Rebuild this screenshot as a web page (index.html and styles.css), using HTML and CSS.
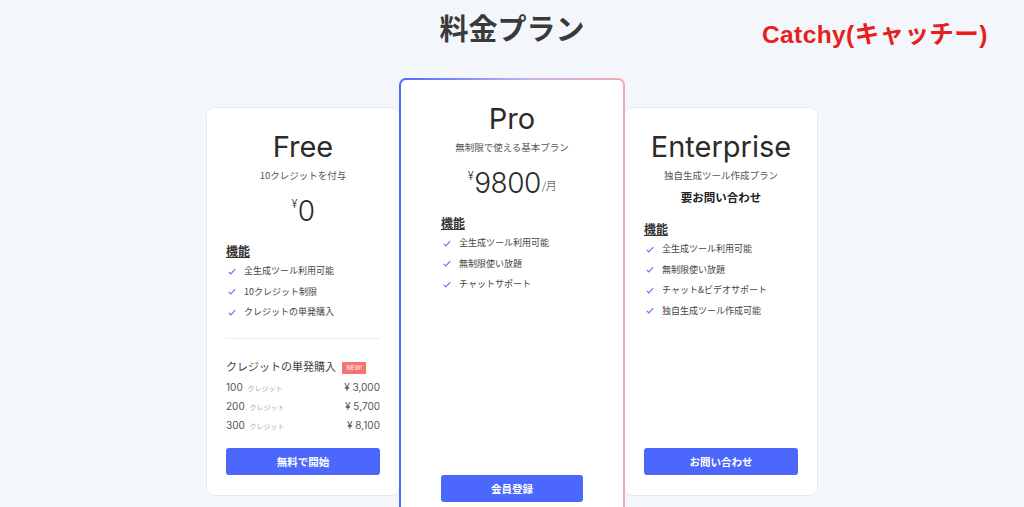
FILE: index.html
```html
<!DOCTYPE html>
<html lang="ja">
<head>
    <meta charset="UTF-8">
    <meta name="viewport" content="width=device-width, initial-scale=1.0">
    <title>料金プラン</title>
    <link rel="stylesheet" href="styles.css">
</head>
<body>
    <h1 class="page-title">料金プラン</h1>
    <div class="catchy">Catchy(キャッチー)</div>

    <div class="plans">
        <!-- Free -->
        <div class="plan side">
            <div class="plan-name">Free</div>
            <div class="plan-sub">10クレジットを付与</div>
            <div class="price"><span class="yen">¥</span>0</div>
            <div class="features-title">機能</div>
            <ul class="features">
                <li><svg viewBox="0 0 10 8"><polyline points="1,4.5 3.5,7 9,1"/></svg>全生成ツール利用可能</li>
                <li><svg viewBox="0 0 10 8"><polyline points="1,4.5 3.5,7 9,1"/></svg>10クレジット制限</li>
                <li><svg viewBox="0 0 10 8"><polyline points="1,4.5 3.5,7 9,1"/></svg>クレジットの単発購入</li>
            </ul>
            <hr class="divider">
            <div class="credit-title">クレジットの単発購入 <span class="badge">NEW!</span></div>
            <div class="credit-row"><span><b>100</b> <small>クレジット</small></span><span>¥ 3,000</span></div>
            <div class="credit-row"><span><b>200</b> <small>クレジット</small></span><span>¥ 5,700</span></div>
            <div class="credit-row"><span><b>300</b> <small>クレジット</small></span><span>¥ 8,100</span></div>
            <button class="btn">無料で開始</button>
        </div>

        <!-- Pro -->
        <div class="plan pro">
            <div class="plan-name">Pro</div>
            <div class="plan-sub">無制限で使える基本プラン</div>
            <div class="price"><span class="yen">¥</span>9800<span class="per">/月</span></div>
            <div class="features-title">機能</div>
            <ul class="features">
                <li><svg viewBox="0 0 10 8"><polyline points="1,4.5 3.5,7 9,1"/></svg>全生成ツール利用可能</li>
                <li><svg viewBox="0 0 10 8"><polyline points="1,4.5 3.5,7 9,1"/></svg>無制限使い放題</li>
                <li><svg viewBox="0 0 10 8"><polyline points="1,4.5 3.5,7 9,1"/></svg>チャットサポート</li>
            </ul>
            <button class="btn">会員登録</button>
        </div>

        <!-- Enterprise -->
        <div class="plan side">
            <div class="plan-name">Enterprise</div>
            <div class="plan-sub">独自生成ツール作成プラン</div>
            <div class="contact">要お問い合わせ</div>
            <div class="features-title">機能</div>
            <ul class="features">
                <li><svg viewBox="0 0 10 8"><polyline points="1,4.5 3.5,7 9,1"/></svg>全生成ツール利用可能</li>
                <li><svg viewBox="0 0 10 8"><polyline points="1,4.5 3.5,7 9,1"/></svg>無制限使い放題</li>
                <li><svg viewBox="0 0 10 8"><polyline points="1,4.5 3.5,7 9,1"/></svg>チャット&amp;ビデオサポート</li>
                <li><svg viewBox="0 0 10 8"><polyline points="1,4.5 3.5,7 9,1"/></svg>独自生成ツール作成可能</li>
            </ul>
            <button class="btn">お問い合わせ</button>
        </div>
    </div>
</body>
</html>
```

FILE: styles.css
```css
body {
    font-family: "Inter", "Noto Sans CJK JP", sans-serif;
    margin: 0;
    padding: 0;
    background-color: #f3f6fa;
    color: #333;
    overflow: hidden;
}
.page-title {
    margin: 0;
    padding-top: 7px;
    text-align: center;
    font-family: "Noto Sans CJK JP", sans-serif;
    font-size: 29px;
    line-height: 40px;
    font-weight: 700;
    color: #3a3a3a;
}
.catchy {
    position: absolute;
    top: 18px;
    left: 762px;
    font-family: "Liberation Sans", "Noto Sans CJK JP", sans-serif;
    font-size: 24.5px;
    font-weight: 700;
    line-height: 34px;
    letter-spacing: 0.4px;
    color: #e8201c;
}
.plans {
    display: flex;
    justify-content: center;
    align-items: flex-start;
    margin-top: 31px;
}
.plan {
    box-sizing: border-box;
    display: flex;
    flex-direction: column;
    background-color: #fff;
}
.side {
    width: 194px;
    height: 389px;
    margin-top: 29px;
    padding: 21px 19px 20px;
    border: 1px solid #e6ebf1;
    border-radius: 8px;
}
.pro {
    position: relative;
    z-index: 1;
    width: 226px;
    height: 448px;
    margin: 0 -1px;
    padding: 21px 40px 22px;
    border: 2px solid transparent;
    border-radius: 7px;
    background: linear-gradient(#fff, #fff) padding-box,
                linear-gradient(90deg, #4b68ff, #c9b6ee 60%, #f6a7ad) border-box;
}
.plan-name {
    text-align: center;
    font-size: 29px;
    line-height: 36px;
    color: #2b2b2b;
}
.plan-sub {
    margin-top: 2px;
    text-align: center;
    font-family: "Noto Sans CJK JP", sans-serif;
    font-size: 9.5px;
    line-height: 16px;
    color: #555;
}
.price {
    margin-top: 10px;
    text-align: center;
    font-size: 28px;
    line-height: 36px;
    font-weight: 300;
    letter-spacing: -0.5px;
    color: #2b2b2b;
}
.yen {
    font-size: 11px;
    line-height: 0;
    vertical-align: 13px;
    margin-right: 1px;
}
.per {
    font-size: 11px;
    line-height: 0;
    font-family: "Noto Sans CJK JP", sans-serif;
    margin-left: 1px;
    vertical-align: 3px;
}
.contact {
    margin-top: 6px;
    text-align: center;
    font-family: "Noto Sans CJK JP", sans-serif;
    font-size: 11.5px;
    font-weight: 700;
    line-height: 16px;
    color: #222;
}
.features-title {
    margin-top: 13px;
    font-family: "Noto Sans CJK JP", sans-serif;
    font-size: 12px;
    font-weight: 700;
    line-height: 18px;
    color: #333;
    text-decoration: underline;
}
.side .contact + .features-title {
    margin-top: 15px;
}
.features {
    list-style: none;
    margin: 1px 0 0;
    padding: 0;
}
.features li {
    display: flex;
    align-items: center;
    font-family: "Noto Sans CJK JP", sans-serif;
    font-size: 9px;
    line-height: 20.5px;
    color: #444;
}
.features svg {
    width: 8px;
    height: 7px;
    margin: 0 8px 0 2px;
    fill: none;
    stroke: #5a78f0;
    stroke-width: 1.4;
}
.divider {
    margin: 15px 0 0;
    border: none;
    border-top: 1px solid #e9ecf0;
}
.credit-title {
    margin-top: 18px;
    font-family: "Noto Sans CJK JP", sans-serif;
    font-size: 11px;
    line-height: 18px;
    color: #444;
}
.badge {
    display: inline-block;
    margin-left: 4px;
    padding: 0 4px;
    background-color: #f57373;
    color: #fff;
    font-family: "Inter", sans-serif;
    font-size: 6px;
    line-height: 12px;
    vertical-align: 1px;
}
.credit-row {
    display: flex;
    justify-content: space-between;
    align-items: center;
    height: 19px;
    font-size: 10px;
    line-height: 19px;
    color: #555;
}
.credit-title + .credit-row {
    margin-top: 3px;
}
.credit-row b {
    font-weight: 400;
}
.credit-row small {
    font-family: "Noto Sans CJK JP", sans-serif;
    font-size: 7px;
    line-height: 0;
    color: #aaa;
    margin-left: 2px;
}
.btn {
    margin-top: auto;
    height: 27px;
    border: none;
    border-radius: 3px;
    background-color: #4b67fc;
    color: #fff;
    font-family: "Noto Sans CJK JP", sans-serif;
    font-size: 10.5px;
    font-weight: 700;
    cursor: pointer;
}
```
